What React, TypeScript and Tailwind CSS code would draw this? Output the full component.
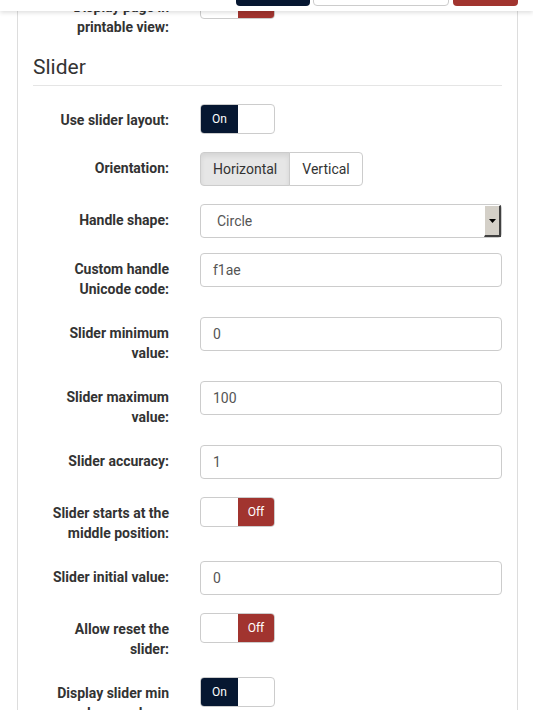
import type { ReactNode } from 'react'

const NAVY = 'bg-[#061731]'
const RED = 'bg-[#a1342f]'

function Toggle({ on }: { on: boolean }) {
  return (
    <div className="flex h-[30px] w-[75px] overflow-hidden rounded-[4px] border border-[#cccccc] bg-white text-[12px] text-white">
      {on ? (
        <>
          <span className={`flex w-[37px] items-center justify-center ${NAVY}`}>On</span>
          <span className="flex-1" />
        </>
      ) : (
        <>
          <span className="w-[37px]" />
          <span className={`flex flex-1 items-center justify-center ${RED}`}>Off</span>
        </>
      )}
    </div>
  )
}

function TextInput({ value }: { value: string }) {
  return (
    <div className="flex h-[34px] w-full items-center rounded-[4px] border border-[#cccccc] bg-white px-[12px] text-[14px] text-[#555555]">
      {value}
    </div>
  )
}

function Row({
  label,
  children,
  className = '',
  labelClass = 'pt-[6px]',
}: {
  label: ReactNode
  children: ReactNode
  className?: string
  labelClass?: string
}) {
  return (
    <div className={`flex items-start gap-[31px] ${className}`}>
      <div className={`w-[136px] shrink-0 text-right text-[14px] font-bold leading-[20px] text-[#333333] ${labelClass}`}>
        {label}
      </div>
      <div className="flex-1">{children}</div>
    </div>
  )
}

export default function App() {
  return (
    <div className="relative min-h-screen overflow-hidden bg-white font-['Roboto','Liberation_Sans',sans-serif]">
      {/* sticky action bar, mostly scrolled out of view */}
      <div className="fixed inset-x-0 top-0 z-10 h-[11px] bg-white shadow-[0_2px_4px_rgba(0,0,0,0.12)]">
        <div className="absolute left-[236px] top-[-30px] h-[36px] w-[74px] rounded-[4px] bg-[#061731]" />
        <div className="absolute left-[313px] top-[-30px] h-[36px] w-[136px] rounded-[4px] border border-[#cccccc] bg-white" />
        <div className="absolute left-[453px] top-[-30px] h-[36px] w-[65px] rounded-[4px] bg-[#a1342f]" />
      </div>

      <div className="ml-[17px] mr-[15px] mt-[-11px] min-h-[760px] border-x border-[#dddddd] px-[15px]">
        <Row label={<>Display page in<br />printable view:</>} labelClass="pt-[8px]">
          <Toggle on={false} />
        </Row>

        <h2 className="mt-[19px] border-b border-[#e5e5e5] pb-[6px] text-[21px] leading-[23px] text-[#333333]">
          Slider
        </h2>

        <div className="mt-[18px] flex flex-col gap-[18px]">
          <Row label="Use slider layout:">
            <Toggle on />
          </Row>

          <Row label="Orientation:">
            <div className="flex h-[34px] w-fit text-[14px] text-[#333333]">
              <span className="flex items-center rounded-l-[4px] border border-[#cccccc] bg-[#e6e6e6] px-[12px] shadow-[inset_0_3px_5px_rgba(0,0,0,0.08)]">
                Horizontal
              </span>
              <span className="ml-[-1px] flex items-center rounded-r-[4px] border border-[#cccccc] bg-white px-[12px]">
                Vertical
              </span>
            </div>
          </Row>

          <Row label="Handle shape:" className="mb-[-3px]">
            <div className="flex h-[34px] w-full items-stretch rounded-[4px] border border-[#cccccc] bg-white text-[14px] text-[#555555]">
              <span className="flex flex-1 items-center pl-[16px]">Circle</span>
              <span className="flex w-[17px] items-center justify-center border-b-2 border-l border-r-2 border-t border-b-[#404040] border-l-[#ffffff] border-r-[#404040] border-t-[#ffffff] bg-[#d4d0c8]">
                <svg width="7" height="4" viewBox="0 0 7 4">
                  <path d="M0 0h7L3.5 4z" fill="#000" />
                </svg>
              </span>
            </div>
          </Row>

          <Row label={<>Custom handle<br />Unicode code:</>}>
            <TextInput value="f1ae" />
          </Row>

          <Row label={<>Slider minimum<br />value:</>}>
            <TextInput value="0" />
          </Row>

          <Row label={<>Slider maximum<br />value:</>}>
            <TextInput value="100" />
          </Row>

          <Row label="Slider accuracy:">
            <TextInput value="1" />
          </Row>

          <Row label={<>Slider starts at the<br />middle position:</>}>
            <Toggle on={false} />
          </Row>

          <Row label="Slider initial value:">
            <TextInput value="0" />
          </Row>

          <Row label={<>Allow reset the<br />slider:</>}>
            <Toggle on={false} />
          </Row>

          <Row label={<>Display slider min<br />and max values:</>}>
            <Toggle on />
          </Row>
        </div>
      </div>
    </div>
  )
}
